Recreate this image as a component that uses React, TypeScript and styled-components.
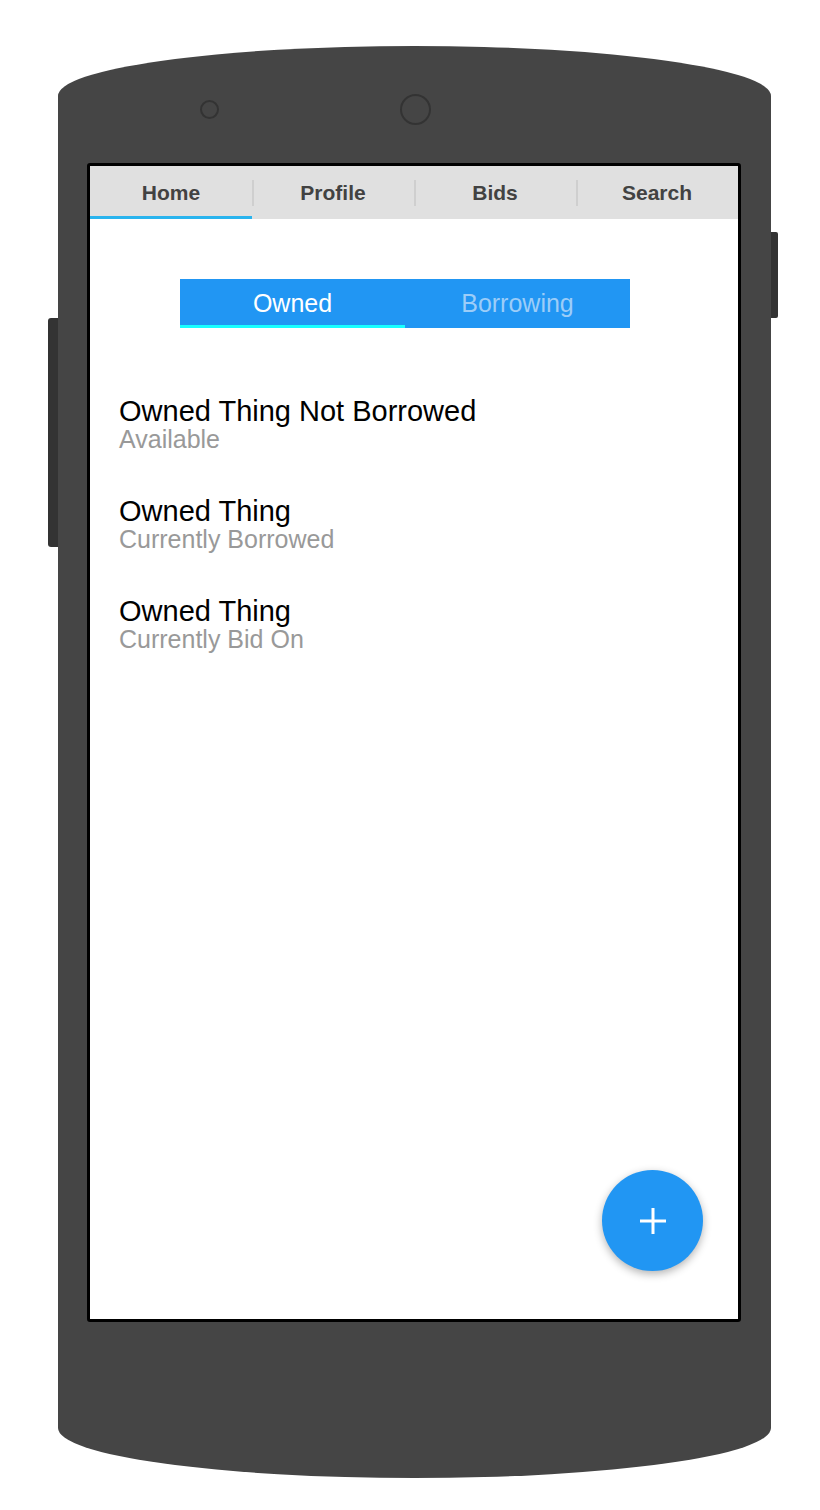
import styled, { createGlobalStyle } from "styled-components";

const GlobalStyle = createGlobalStyle`
  html, body {
    margin: 0;
    padding: 0;
    background: #ffffff;
    font-family: "Liberation Sans", Arial, Helvetica, sans-serif;
  }
`;

const Page = styled.div`
  width: 820px;
  height: 1510px;
  display: flex;
  align-items: flex-start;
  padding: 46px 0 0 48px;
  box-sizing: border-box;
`;

const SideButton = styled.div<{ $side: "left" | "right"; $top: number; $height: number }>`
  width: ${(p) => (p.$side === "left" ? 10 : 7)}px;
  height: ${(p) => p.$height}px;
  margin-top: ${(p) => p.$top}px;
  background: #333333;
  border-radius: ${(p) => (p.$side === "left" ? "3px 0 0 3px" : "0 2px 2px 0")};
`;

const PhoneBody = styled.div`
  width: 713px;
  height: 1432px;
  background: #454545;
  border-radius: 50% / 50px;
  display: flex;
  flex-direction: column;
`;

const CameraRow = styled.div`
  height: 117px;
  box-sizing: border-box;
  padding: 48px 0 38px 142px;
  display: flex;
  align-items: center;
  gap: 181px;
  align-self: flex-start;
`;

const Camera = styled.div<{ $size: number }>`
  width: ${(p) => p.$size}px;
  height: ${(p) => p.$size}px;
  box-sizing: border-box;
  border: 2px solid #333333;
  border-radius: 50%;
`;

const Screen = styled.div`
  margin-left: 29px;
  width: 654px;
  height: 1159px;
  box-sizing: border-box;
  border: 3px solid #000000;
  border-radius: 3px;
  background: #ffffff;
  display: flex;
  flex-direction: column;
`;

const TabBar = styled.div`
  height: 53px;
  background: #e0e0e0;
  display: grid;
  grid-template-columns: repeat(4, 1fr);
  flex-shrink: 0;
`;

const Tab = styled.div<{ $active?: boolean; $divider?: boolean }>`
  position: relative;
  display: flex;
  align-items: center;
  justify-content: center;
  font-size: 21px;
  font-weight: bold;
  color: #424242;
  box-sizing: border-box;
  border-bottom: 3px solid ${(p) => (p.$active ? "#2ab4ee" : "transparent")};
  padding-top: 3px;

  &::before {
    content: "";
    display: ${(p) => (p.$divider ? "block" : "none")};
    position: absolute;
    left: 0;
    top: 14px;
    width: 2px;
    height: 26px;
    background: #cfcfcf;
  }
`;

const Content = styled.div`
  flex: 1;
  display: flex;
  flex-direction: column;
  padding: 60px 0 0 0;
`;

const Segments = styled.div`
  margin-left: 90px;
  width: 450px;
  height: 49px;
  background: #2196f3;
  display: flex;
`;

const Segment = styled.div<{ $active?: boolean }>`
  flex: 1;
  display: flex;
  align-items: center;
  justify-content: center;
  font-size: 25px;
  color: ${(p) => (p.$active ? "#ffffff" : "#9ccdf8")};
  box-sizing: border-box;
  border-bottom: 3px solid ${(p) => (p.$active ? "#18ffff" : "transparent")};
  padding-top: 2px;
`;

const List = styled.div`
  margin: 68px 0 0 29px;
  display: flex;
  flex-direction: column;
  gap: 45px;
`;

const Item = styled.div`
  display: flex;
  flex-direction: column;
`;

const Title = styled.div`
  font-size: 29px;
  line-height: 30px;
  color: #000000;
`;

const Subtitle = styled.div`
  font-size: 25px;
  line-height: 24px;
  margin-top: 1px;
  color: #999999;
`;

const FabRow = styled.div`
  display: flex;
  justify-content: flex-end;
  padding: 0 35px 48px 0;
`;

const Fab = styled.button`
  width: 101px;
  height: 101px;
  border-radius: 50%;
  border: none;
  background: #2196f3;
  box-shadow: 0 3px 8px rgba(0, 0, 0, 0.3);
  display: flex;
  align-items: center;
  justify-content: center;
  padding: 0;
`;

const items = [
  { title: "Owned Thing Not Borrowed", status: "Available" },
  { title: "Owned Thing", status: "Currently Borrowed" },
  { title: "Owned Thing", status: "Currently Bid On" },
];

const tabs = ["Home", "Profile", "Bids", "Search"];

const App = () => {
  return (
    <>
      <GlobalStyle />
      <Page>
        <SideButton $side="left" $top={272} $height={229} />
        <PhoneBody>
          <CameraRow>
            <Camera $size={19} />
            <Camera $size={31} />
          </CameraRow>
          <Screen>
            <TabBar>
              {tabs.map((t, i) => (
                <Tab key={t} $active={i === 0} $divider={i > 0}>
                  {t}
                </Tab>
              ))}
            </TabBar>
            <Content>
              <Segments>
                <Segment $active>Owned</Segment>
                <Segment>Borrowing</Segment>
              </Segments>
              <List>
                {items.map((it, i) => (
                  <Item key={i}>
                    <Title>{it.title}</Title>
                    <Subtitle>{it.status}</Subtitle>
                  </Item>
                ))}
              </List>
            </Content>
            <FabRow>
              <Fab aria-label="add">
                <svg width="28" height="28" viewBox="0 0 28 28">
                  <path d="M14 1 V27 M1 14 H27" stroke="#ffffff" strokeWidth="3" fill="none" />
                </svg>
              </Fab>
            </FabRow>
          </Screen>
        </PhoneBody>
        <SideButton $side="right" $top={186} $height={86} />
      </Page>
    </>
  );
};

export default App;
